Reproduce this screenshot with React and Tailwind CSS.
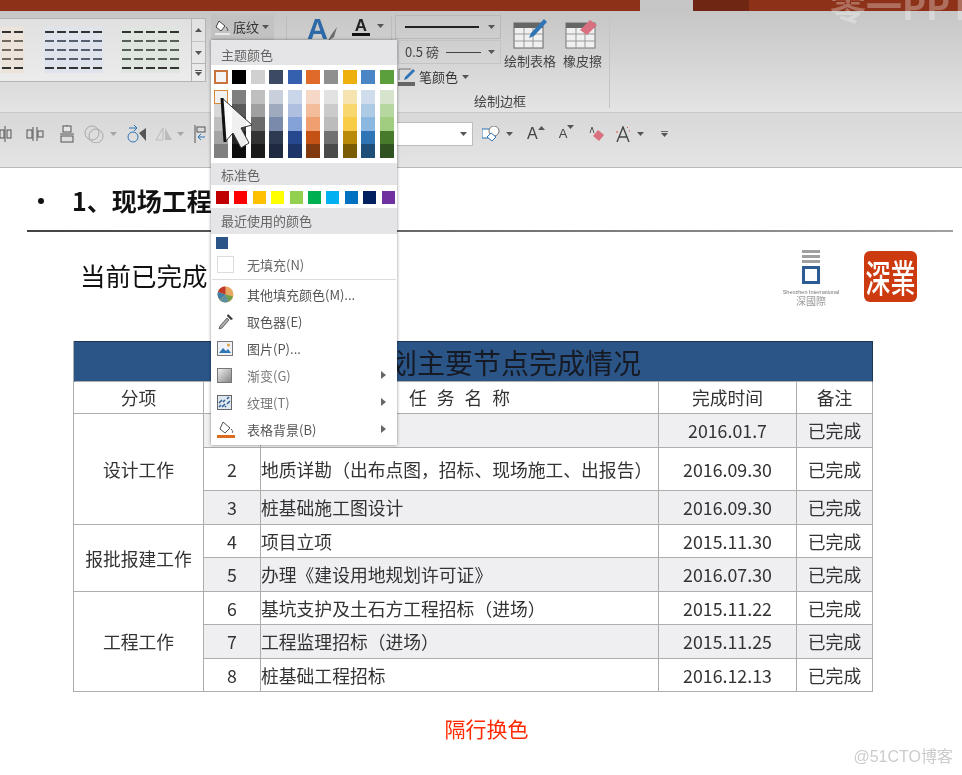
const themeTop = ['#f4f4f4', '#000000', '#d0d0d0', '#3c4a63', '#3560b0', '#e06a2a', '#8f8f8f', '#eeb00d', '#4a86c5', '#5b9e3c']

const themeShades = [
  ['#f2f2f2', '#d8d8d8', '#bfbfbf', '#a5a5a5', '#7f7f7f'],
  ['#7f7f7f', '#595959', '#3f3f3f', '#262626', '#0d0d0d'],
  ['#bfbfbf', '#a0a0a0', '#6b6b6b', '#333333', '#1a1a1a'],
  ['#c8d0dc', '#a0aabe', '#7a8aaa', '#2e3a50', '#1f2a40'],
  ['#c9d6ea', '#aebfe0', '#85a2d8', '#26488f', '#1c3468'],
  ['#f5d8c8', '#f3bd9c', '#f0a070', '#c45214', '#813a10'],
  ['#e2e2e2', '#cbcbcb', '#bcbcbc', '#707070', '#4a4a4a'],
  ['#f6e4b0', '#f7d76e', '#f9cc48', '#b98a08', '#7a5c04'],
  ['#cfdcec', '#aecbe6', '#8ab8e0', '#2f75b5', '#1f4e78'],
  ['#d7e4cd', '#b6d7a0', '#a0cd80', '#477a2a', '#2f5220'],
]

const standard = ['#c00000', '#ff0000', '#ffc000', '#ffff00', '#92d050', '#00b050', '#00b0f0', '#0070c0', '#002060', '#7030a0']

const rows = [
  { no: '', task: '', date: '2016.01.7', h: 'h-[34px]', alt: true },
  { no: 2, task: '地质详勘（出布点图，招标、现场施工、出报告）', date: '2016.09.30', h: 'h-[43px]' },
  { no: 3, task: '桩基础施工图设计', date: '2016.09.30', h: 'h-[34px]', alt: true },
  { no: 4, task: '项目立项', date: '2015.11.30', h: 'h-[33px]' },
  { no: 5, task: '办理《建设用地规划许可证》', date: '2016.07.30', h: 'h-[34px]', alt: true },
  { no: 6, task: '基坑支护及土石方工程招标（进场）', date: '2015.11.22', h: 'h-[33px]' },
  { no: 7, task: '工程监理招标（进场）', date: '2015.11.25', h: 'h-[34px]', alt: true },
  { no: 8, task: '桩基础工程招标', date: '2016.12.13', h: 'h-[33px]' },
]

const groups = [
  { name: '设计工作', span: 'row-span-3', start: 'row-start-3' },
  { name: '报批报建工作', span: 'row-span-2', start: 'row-start-6' },
  { name: '工程工作', span: 'row-span-3', start: 'row-start-8' },
]

const Caret = ({ className = '' }) => (
  <svg width="7" height="4" viewBox="0 0 7 4" className={className}>
    <path d="M0 0h7L3.5 4z" fill="#555" />
  </svg>
)

const MiniTable = ({ cols = 5, color, tint, className = '' }) => (
  <div className={`grid gap-x-[3px] gap-y-[7px] py-[4px] px-[1px] ${className}`} style={{ gridTemplateColumns: `repeat(${cols}, 9px)`, backgroundColor: tint }}>
    {Array.from({ length: cols * 5 }).map((_, i) => (
      <span key={i} className="h-[2px] w-[9px]" style={{ backgroundColor: i < cols || i >= cols * 4 ? '#333' : color }} />
    ))}
  </div>
)

const Ribbon = () => (
  <div className="flex h-[101px] bg-gradient-to-b from-[#c6c6c6] to-[#e4e4e4]">
    <div className="mt-[7px] flex h-[64px] w-[206px] shrink-0 border border-l-0 border-[#b4b4b4] bg-gradient-to-b from-[#e0e0e0] to-[#ececec]">
      <div className="flex w-[191px] items-center">
        <MiniTable cols={2} color="#6e6a60" tint="#ece4da" className="ml-[1px]" />
        <MiniTable color="#56606e" tint="#dfe3ec" className="ml-[20px]" />
        <MiniTable color="#566056" tint="#dfe6df" className="ml-[18px]" />
      </div>
      <div className="flex flex-1 flex-col border-l border-[#b4b4b4]">
        <div className="flex h-[23px] items-center justify-center border-b border-[#c4c4c4]"><Caret className="rotate-180" /></div>
        <div className="flex h-[22px] items-center justify-center border-b border-[#b4b4b4]"><Caret /></div>
        <div className="flex flex-1 flex-col items-center justify-center gap-[1px]">
          <span className="h-px w-[7px] bg-[#555]" />
          <Caret />
        </div>
      </div>
    </div>
    <div className="ml-[5px] mt-[3px] flex h-[26px] w-[63px] shrink-0 items-center gap-[2px] bg-[#c2c2c2] pl-[3px] text-[13px] text-[#333]">
      <svg width="17" height="17" viewBox="0 0 17 17">
        <path d="M5 2l6 5-4 5-5-4z" fill="#fff" stroke="#444" />
        <path d="M12 8c2 2 2 3 1 4" fill="none" stroke="#444" />
        <rect x="1" y="14" width="15" height="2" fill="#e8e8e8" />
      </svg>
      <span>底纹</span>
      <Caret className="ml-[1px]" />
    </div>
    <div className="ml-[12px] mt-[4px] h-[56px] w-px shrink-0 bg-[#bdbdbd]" />
    <div className="ml-[20px] mt-[7px] flex h-[23px] shrink-0 items-end">
      <span className="font-['Liberation_Sans',sans-serif] text-[29px] font-bold leading-[23px] text-[#2f6aa8]">A</span>
      <svg width="10" height="14" viewBox="0 0 10 14"><path d="M9 0L3 8l-3 6 6-4z" fill="#6b6b6b" /></svg>
    </div>
    <div className="ml-[14px] mt-[7px] flex h-[28px] shrink-0 items-start">
      <div className="flex flex-col items-center">
        <span className="font-['Liberation_Sans',sans-serif] text-[17px] font-bold leading-[15px] text-[#222]">A</span>
        <span className="h-[3px] w-[18px] bg-[#111]" />
      </div>
      <Caret className="ml-[7px] mt-[6px]" />
    </div>
    <div className="ml-[7px] mt-[4px] h-[56px] w-px shrink-0 bg-[#bdbdbd]" />
    <div className="ml-[3px] mt-[4px] flex w-[214px] shrink-0 flex-col">
      <div className="flex h-[79px]">
        <div className="w-[106px] shrink-0">
          <div className="flex h-[24px] items-center justify-between border border-[#b8b8b8] pl-[9px] pr-[5px]">
            <span className="h-[2px] w-[74px] bg-[#222]" />
            <Caret />
          </div>
          <div className="ml-[3px] mt-[1px] flex h-[24px] items-center justify-between border border-[#c4c4c4] pl-[6px] pr-[5px] text-[13px] text-[#444]">
            <span>0.5 磅</span>
            <span className="h-px w-[35px] bg-[#444]" />
            <Caret />
          </div>
          <div className="mt-[1px] flex h-[24px] items-center pl-[3px] text-[13px] text-[#333]">
            <svg width="18" height="18" viewBox="0 0 18 18">
              <path d="M1 1h12M1 1v11" stroke="#777" fill="none" />
              <path d="M15 1l2 2-8 8-3 1 1-3z" fill="#2f75b5" />
              <rect x="0" y="14" width="17" height="4" fill="#666" />
            </svg>
            <span className="ml-[3px]">笔颜色</span>
            <Caret className="ml-[4px]" />
          </div>
        </div>
        <div className="ml-[3px] flex">
          <div className="flex w-[52px] flex-col items-center pt-[4px]">
            <svg width="34" height="30" viewBox="0 0 34 30">
              <rect x="1" y="4" width="29" height="25" fill="#f0f0f0" stroke="#666" />
              <rect x="1" y="4" width="29" height="5" fill="#666" />
              <path d="M1 15h29M1 22h29M11 9v20M20 9v20" stroke="#999" />
              <path d="M31 0l3 3-13 14-5 2 2-5z" fill="#2f75b5" />
            </svg>
            <span className="mt-[3px] whitespace-nowrap text-[13px] leading-[18px] text-[#444]">绘制表格</span>
          </div>
          <div className="flex w-[53px] flex-col items-center pt-[4px]">
            <svg width="34" height="30" viewBox="0 0 34 30">
              <rect x="1" y="4" width="29" height="25" fill="#f0f0f0" stroke="#777" />
              <rect x="1" y="4" width="29" height="5" fill="#666" />
              <path d="M1 15h29M1 22h29M11 9v20M20 9v20" stroke="#999" />
              <path d="M25 1l7 5-10 10-7-5z" fill="#d9707f" />
            </svg>
            <span className="mt-[3px] whitespace-nowrap text-[13px] leading-[18px] text-[#444]">橡皮擦</span>
          </div>
        </div>
      </div>
      <div className="pr-[4px] text-center text-[13px] leading-[14px] text-[#444]">绘制边框</div>
    </div>
    <div className="mt-[4px] h-[93px] w-px shrink-0 bg-[#c4c4c4]" />
  </div>
)

const Toolbar = () => (
  <div className="flex h-[56px] items-center border-y border-y-[#b8b8b8] border-t-[#c8c8c8] bg-gradient-to-b from-[#d8d8d8] to-[#e4e4e4] pb-[12px] text-[#555]">
    <svg width="12" height="16" viewBox="0 0 12 16"><path d="M5 0v16" stroke="#555" /><rect x="0" y="4" width="4" height="8" fill="none" stroke="#555" /><rect x="7" y="4" width="4" height="8" fill="none" stroke="#555" /></svg>
    <svg width="18" height="14" viewBox="0 0 18 14" className="ml-[14px]"><path d="M7 0v14M11 0v14" stroke="#555" /><rect x="1" y="3" width="5" height="8" fill="none" stroke="#555" /><rect x="12" y="4" width="5" height="6" fill="none" stroke="#555" /></svg>
    <svg width="14" height="18" viewBox="0 0 14 18" className="ml-[16px]"><path d="M7 0v4M0 9h14" stroke="#555" /><rect x="3" y="1" width="8" height="6" fill="#e4e4e4" stroke="#555" /><rect x="1" y="11" width="12" height="6" fill="none" stroke="#555" /></svg>
    <svg width="20" height="18" viewBox="0 0 20 18" className="ml-[10px]"><circle cx="8" cy="8" r="7" fill="none" stroke="#a8a8a8" /><circle cx="12" cy="11" r="7" fill="none" stroke="#a8a8a8" /></svg>
    <Caret className="ml-[6px] opacity-40" />
    <svg width="20" height="18" viewBox="0 0 20 18" className="ml-[10px]"><circle cx="6" cy="12" r="5" fill="none" stroke="#2f75b5" /><path d="M2 3h8M7 0l3 3-3 3" fill="none" stroke="#2f75b5" /><path d="M12 8l7-5v13z" fill="#555" /></svg>
    <svg width="18" height="16" viewBox="0 0 18 16" className="ml-[8px]"><path d="M1 14L8 2v12z" fill="none" stroke="#bbb" /><path d="M10 2l7 12h-7z" fill="#bbb" /></svg>
    <Caret className="ml-[4px] opacity-40" />
    <svg width="12" height="18" viewBox="0 0 12 18" className="ml-[10px]"><path d="M1 0v18" stroke="#555" /><rect x="3" y="2" width="8" height="5" fill="none" stroke="#555" /><path d="M11 12H4M7 9l-3 3 3 3" fill="none" stroke="#2f75b5" /></svg>
    <div className="ml-[190px] flex h-[24px] w-[77px] shrink-0 items-center justify-end border border-[#bdbdbd] bg-white pr-[5px]">
      <Caret />
    </div>
    <svg width="18" height="16" viewBox="0 0 18 16" className="ml-[9px]"><rect x="0" y="3" width="10" height="9" fill="#fff" stroke="#2f75b5" /><circle cx="12" cy="5" r="5" fill="#fff" stroke="#777" /><path d="M9 7l5 4-4 4-5-4z" fill="#fff" stroke="#2f75b5" /></svg>
    <Caret className="ml-[6px]" />
    <span className="ml-[14px] flex items-start font-['Liberation_Sans',sans-serif] text-[16px] leading-[18px] text-[#444]">A<Caret className="mt-[1px] rotate-180" /></span>
    <span className="ml-[14px] flex items-start font-['Liberation_Sans',sans-serif] text-[13px] leading-[16px] text-[#444]">A<Caret className="mt-[-1px]" /></span>
    <span className="ml-[15px] flex">
      <svg width="16" height="16" viewBox="0 0 16 16"><path d="M9 4l6 5-5 6-6-5z" fill="#d9707f" /><path d="M1 7l2-6 2 6" fill="none" stroke="#555" /></svg>
    </span>
    <span className="ml-[11px] flex">
      <svg width="14" height="16" viewBox="0 0 14 16"><path d="M1 16L7 1l6 15M3.5 11h7" fill="none" stroke="#444" strokeWidth="1.4" /><path d="M0 6h2M11 1l1 1M13 5h1" stroke="#d9503f" /></svg>
    </span>
    <Caret className="ml-[7px]" />
    <span className="ml-[17px] flex flex-col items-center gap-[1px]">
      <span className="h-px w-[7px] bg-[#666]" />
      <Caret />
    </span>
  </div>
)

const MenuHead = ({ children, className = '' }) => (
  <div className={`bg-[#e5e5e7] pl-[10px] text-[13px] leading-[20px] text-[#666] ${className}`}>{children}</div>
)

const MenuItem = ({ icon, label, arrow, gray }) => (
  <div className={`flex h-[27px] items-center text-[13px] ${gray ? 'text-[#777]' : 'text-[#555]'}`}>
    <span className="flex w-[36px] shrink-0 justify-start pl-[6px]">{icon}</span>
    <span>{label}</span>
    {arrow && (
      <svg width="5" height="8" viewBox="0 0 5 8" className="ml-auto mr-[11px]"><path d="M0 0l5 4-5 4z" fill="#666" /></svg>
    )}
  </div>
)

const FillMenu = () => (
  <div className="absolute left-[211px] top-[40px] h-[405px] w-[186px] bg-white shadow-[0_0_3px_rgba(0,0,0,0.45)]">
    <MenuHead className="h-[25px] pt-[5px]">主题颜色</MenuHead>
    <div className="flex gap-[4.4px] pl-[3px] pt-[5px]">
      {themeTop.map((c, i) => (
        <span key={c} className={`h-[14px] w-[14px] ${i === 0 ? 'border-2 border-[#c8743c]' : ''}`} style={{ backgroundColor: c }} />
      ))}
    </div>
    <div className="flex gap-[4.4px] pl-[3px] pt-[6px]">
      {themeShades.map((col, i) => (
        <div key={i} className="flex w-[14px] flex-col">
          {col.map((c, j) => (
            <span key={j} className={`h-[13.6px] w-[14px] ${i === 0 && j === 0 ? 'border border-[#d9893a]' : ''}`} style={{ backgroundColor: c }} />
          ))}
        </div>
      ))}
    </div>
    <MenuHead className="mt-[5px] h-[22px] pt-[2px]">标准色</MenuHead>
    <div className="flex h-[23px] items-start gap-[5.4px] bg-white pl-[5px] pt-[6px]">
      {standard.map((c) => (
        <span key={c} className="h-[13px] w-[13px]" style={{ backgroundColor: c }} />
      ))}
    </div>
    <MenuHead className="h-[26px] pt-[3px]">最近使用的颜色</MenuHead>
    <div className="h-[22px] pl-[5px] pt-[3px]">
      <span className="block h-[12px] w-[12px] bg-[#2b5586]" />
    </div>
    <div className="flex h-[23px] items-center pb-[5px] text-[13px] text-[#666]">
      <span className="ml-[6px] h-[17px] w-[17px] border border-[#dcdcdc]" />
      <span className="ml-[13px]">无填充(N)</span>
    </div>
    <div className="mx-[1px] h-px bg-[#dcdcdc]" />
    <div className="pt-[1px]">
      <MenuItem label="其他填充颜色(M)..." icon={
        <svg width="17" height="17" viewBox="0 0 17 17">
          <circle cx="8.5" cy="8.5" r="8" fill="#e8a860" />
          <path d="M8.5 8.5L8.5.5A8 8 0 0 0 .9 6z" fill="#c0392b" />
          <path d="M8.5 8.5L.9 6a8 8 0 0 0 2 8z" fill="#3f7fa8" />
          <path d="M8.5 8.5L3 14.5a8 8 0 0 0 9 1z" fill="#5f8f9f" />
          <path d="M8.5 8.5L12 15.5a8 8 0 0 0 4-5z" fill="#6ea04a" />
        </svg>
      } />
      <MenuItem label="取色器(E)" icon={
        <svg width="17" height="17" viewBox="0 0 17 17">
          <path d="M11 1l5 5-2 1-4-4z" fill="#333" />
          <path d="M10 5l2 2-7 8-3 1 1-3z" fill="#aaa" stroke="#666" />
        </svg>
      } />
      <MenuItem label="图片(P)..." icon={
        <svg width="16" height="15" viewBox="0 0 16 15">
          <rect x=".5" y=".5" width="15" height="14" fill="#eef2f7" stroke="#777" />
          <path d="M2 12l4-5 3 3 2-2 3 4z" fill="#2f75b5" />
          <circle cx="11.5" cy="4" r="1.5" fill="#e0a040" />
        </svg>
      } />
      <MenuItem gray label="渐变(G)" arrow icon={
        <span className="block h-[15px] w-[15px] border border-[#777] bg-gradient-to-br from-[#eeeeee] to-[#888888]" />
      } />
      <MenuItem gray label="纹理(T)" arrow icon={
        <svg width="15" height="15" viewBox="0 0 15 15">
          <rect x=".5" y=".5" width="14" height="14" fill="#dfe8f0" stroke="#666" />
          <path d="M2 12l2-2M5 12l3-3M8 12l1-1M2 8l3-3M6 7l2-2M10 9l3-3M10 4l2-2" stroke="#2f5f8f" strokeWidth="1.5" />
        </svg>
      } />
      <MenuItem label="表格背景(B)" arrow icon={
        <svg width="18" height="17" viewBox="0 0 18 17">
          <path d="M6 1l7 6-5 5-5-4z" fill="#fff" stroke="#555" />
          <path d="M14 8c2 2 2 3 1 4" fill="none" stroke="#555" />
          <rect x="0" y="14" width="18" height="3" fill="#dd6b20" />
        </svg>
      } />
    </div>
  </div>
)

const Cursor = () => (
  <svg width="36" height="56" viewBox="0 0 36 56" className="absolute left-[220px] top-[96px]">
    <path d="M2 2L5 46l8-9 8 15 8-5-8-15 11-3z" fill="#fff" fillOpacity="0.92" stroke="#333" strokeWidth="1" />
    <path d="M2 2L5 46" stroke="#111" strokeWidth="3" />
  </svg>
)

const Logos = () => (
  <div className="mr-[45px] flex items-start gap-[23px]">
    <div className="flex w-[60px] flex-col items-center">
      <span className="h-[3px] w-[18px] bg-[#a0a0a0]" />
      <span className="mt-[2px] h-[3px] w-[18px] bg-[#a0a0a0]" />
      <span className="mt-[2px] h-[3px] w-[18px] bg-[#a0a0a0]" />
      <span className="mt-[3px] h-[18px] w-[18px] border-[3px] border-[#2d5c94]" />
      <span className="mt-[4px] whitespace-nowrap font-['Liberation_Sans',sans-serif] text-[5.5px] leading-[8px] text-[#777]">Shenzhen International</span>
      <span className="text-[10px] leading-[10px] text-[#999]">深國際</span>
    </div>
    <div className="mt-[1px] flex h-[51px] w-[53px] items-center justify-center rounded-[6px] bg-[#cc3a10] font-['Noto_Sans_CJK_TC',sans-serif] text-[25px] font-medium leading-none text-white">
      <span className="scale-y-[1.5]">深</span>
      <span className="scale-y-[1.5]">業</span>
    </div>
  </div>
)

const Cell = ({ className = '', children }) => (
  <div className={`flex items-center border-b border-r border-[#adadad] text-[17.8px] text-[#333] ${className}`}>{children}</div>
)

const PlanTable = () => (
  <div className="ml-[73px] mt-[37px] grid w-[800px] grid-cols-[130px_57px_398px_138px_76px] border-l border-[#adadad]">
    <div className="col-span-5 flex h-[41px] items-center justify-end border-x border-y border-b-[#adadad] border-l-[#2b5586] border-r-[#1d3557] border-t-[#1d3557] bg-[#2b5586] pr-[231px] text-[28px] text-[#161a24]">
      计划主要节点完成情况
    </div>
    <Cell className="h-[32px] justify-center">分项</Cell>
    <Cell className="justify-center" />
    <Cell className="justify-center [word-spacing:6px]">任 务 名 称</Cell>
    <Cell className="justify-center">完成时间</Cell>
    <Cell className="justify-center">备注</Cell>
    {groups.map((g) => (
      <Cell key={g.name} className={`col-start-1 justify-center ${g.span} ${g.start}`}>{g.name}</Cell>
    ))}
    {rows.map((r) => {
      const bg = r.alt ? 'bg-[#efeef1]' : ''
      return [
        <Cell key={`n${r.date}${r.task}`} className={`col-start-2 justify-center ${r.h} ${bg}`}>{r.no}</Cell>,
        <Cell key={`t${r.date}${r.task}`} className={`${bg}`}>{r.task}</Cell>,
        <Cell key={`d${r.date}${r.task}`} className={`justify-center ${bg}`}>{r.date}</Cell>,
        <Cell key={`s${r.date}${r.task}`} className={`justify-center ${bg}`}>已完成</Cell>,
      ]
    })}
  </div>
)

const Slide = () => (
  <div className="h-[607px] bg-white">
    <div className="flex h-[62px] items-end pb-[15px] pl-[38px] text-[25px] font-bold leading-[30px] text-[#111]">
      <span className="mb-[11px] mr-[28px] h-[6px] w-[6px] rounded-full bg-[#111]" />
      <span>1、现场工程</span>
    </div>
    <div className="ml-[27px] h-[2px] w-[926px] bg-gradient-to-r from-[#444444] to-[#a0a0a0]" />
    <div className="mt-[18px] flex h-[54px] items-start justify-between">
      <span className="ml-[80px] mt-[10px] text-[25.5px] leading-[30px] text-[#111]">当前已完成</span>
      <Logos />
    </div>
    <PlanTable />
    <div className="mt-[24px] pl-[11px] text-center text-[21px] leading-[24px] text-[#ff2a00]">隔行换色</div>
    <div className="mt-[7px] pr-[9px] text-right font-['Liberation_Sans','Noto_Sans_CJK_SC',sans-serif] text-[16px] leading-[20px] text-[#cccccc]">@51CTO博客</div>
  </div>
)

export default function App() {
  return (
    <div className="relative h-[775px] w-[962px] overflow-hidden bg-white font-['Noto_Sans_CJK_SC','Liberation_Sans',sans-serif] blur-[0.5px]">
      <div className="flex h-[11px]">
        <div className="w-[640px] bg-[#8d3119]" />
        <div className="w-[53px] bg-[#c6c6c6]" />
        <div className="w-[56px] bg-[#6f2612]" />
        <div className="flex-1 bg-[#8d3119]" />
      </div>
      <Ribbon />
      <Toolbar />
      <Slide />
      <span className="absolute left-[830px] top-[-14px] whitespace-nowrap text-[36px] font-bold leading-[36px] text-white/30">零一PPT</span>
      <FillMenu />
      <Cursor />
    </div>
  )
}
